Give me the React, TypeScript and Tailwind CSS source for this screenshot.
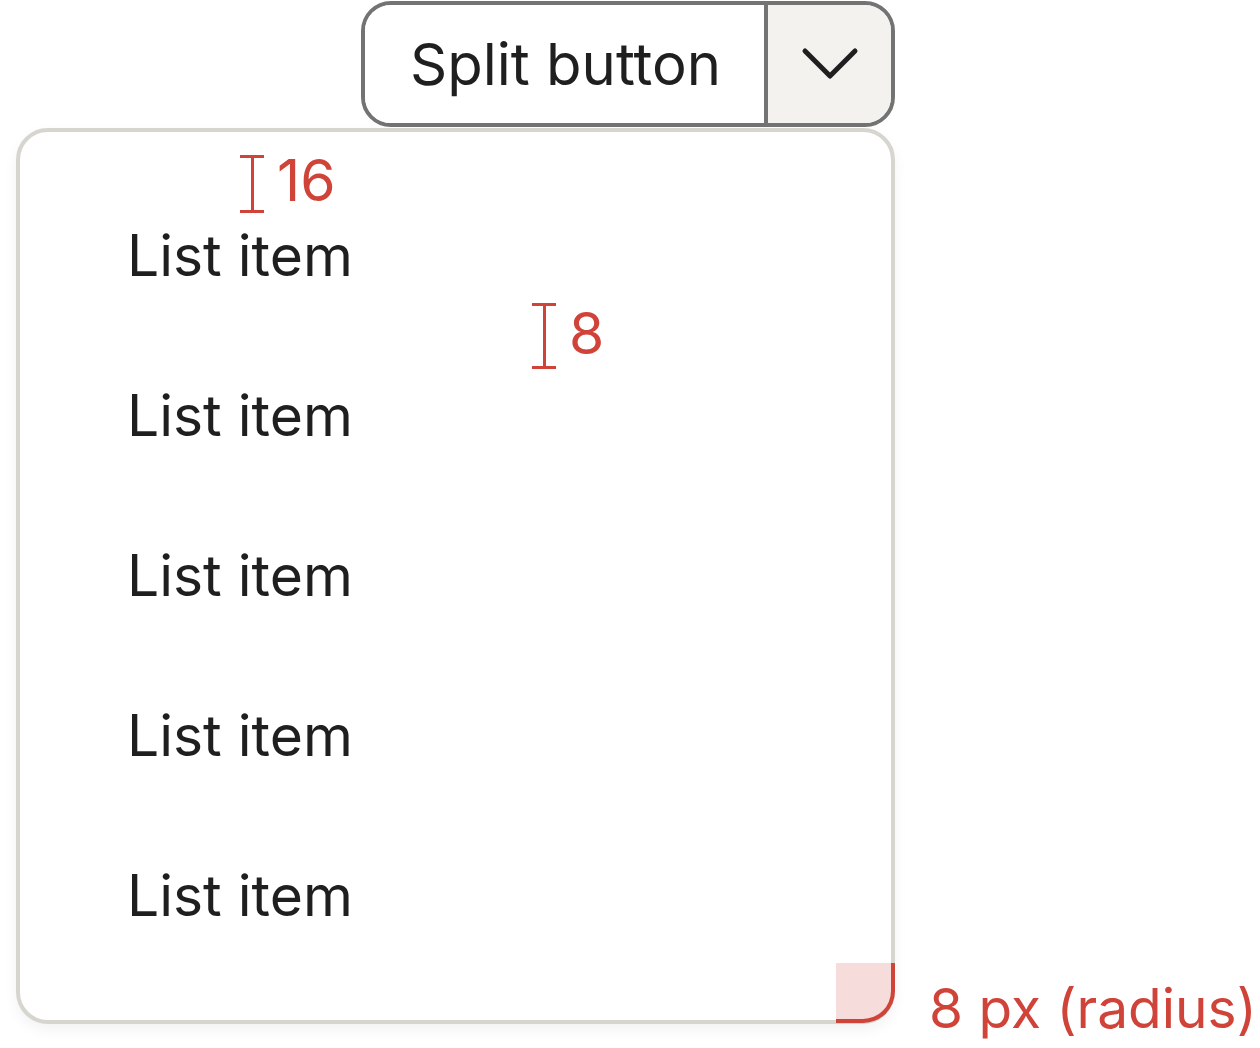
const items = ['List item', 'List item', 'List item', 'List item', 'List item'];

function Bracket({ className }: { className: string }) {
  return (
    <div className={`absolute flex flex-col items-center ${className}`}>
      <div className="h-[3px] w-[24px] bg-[#cf4339]" />
      <div className="w-[3px] flex-1 bg-[#cf4339]" />
      <div className="h-[3px] w-[24px] bg-[#cf4339]" />
    </div>
  );
}

export default function App() {
  return (
    <div className="relative w-[1260px] h-[1048px] bg-white font-['Inter',sans-serif] text-[#1f1f1f] overflow-hidden">
      <div className="flex flex-col items-end w-[895px] pl-[16px] pt-[1px]">
        {/* split button */}
        <div className="flex h-[126px] w-[534px] rounded-[30px] border-4 border-[#737373] overflow-hidden">
          <div className="flex-1 bg-white pl-[45px] pt-[19px] text-[58px] leading-[80px]">Split button</div>
          <div className="flex w-[127px] items-center justify-center border-l-4 border-[#737373] bg-[#f3f2ef]">
            <svg width="58" height="36" viewBox="0 0 58 36" fill="none" className="mt-[-1px]">
              <polyline points="4,5 29,30 54,5" stroke="#1f1f1f" strokeWidth="5" strokeLinecap="round" strokeLinejoin="round" />
            </svg>
          </div>
        </div>

        {/* menu */}
        <div className="mt-[1px] w-[879px] rounded-[32px] border-4 border-[#d6d5cf] bg-white shadow-[0_6px_14px_rgba(0,0,0,0.05)] pt-[60px] pb-[60px] pl-[107px] flex flex-col gap-[32px] text-[57px]">
          {items.map((label, i) => (
            <div key={i} className="h-[128px] flex items-center leading-[80px]">
              {label}
            </div>
          ))}
        </div>
      </div>

      {/* spacing annotations */}
      <Bracket className="left-[240px] top-[155px] h-[58px]" />
      <div className="absolute left-[277px] top-[153px] text-[57px] leading-[56px] text-[#cf4339]">16</div>
      <Bracket className="left-[532px] top-[303px] h-[66px]" />
      <div className="absolute left-[569px] top-[306px] text-[57px] leading-[56px] text-[#cf4339]">8</div>

      {/* radius annotation */}
      <div className="absolute left-[836px] top-[963px] h-[60px] w-[59px] rounded-br-[32px] border-r-4 border-b-4 border-[#cf4339] bg-[#f7dcdc]" />
      <div className="absolute left-[929px] top-[980px] text-[55px] leading-[56px] text-[#cf4339] whitespace-nowrap">8 px (radius)</div>
    </div>
  );
}
